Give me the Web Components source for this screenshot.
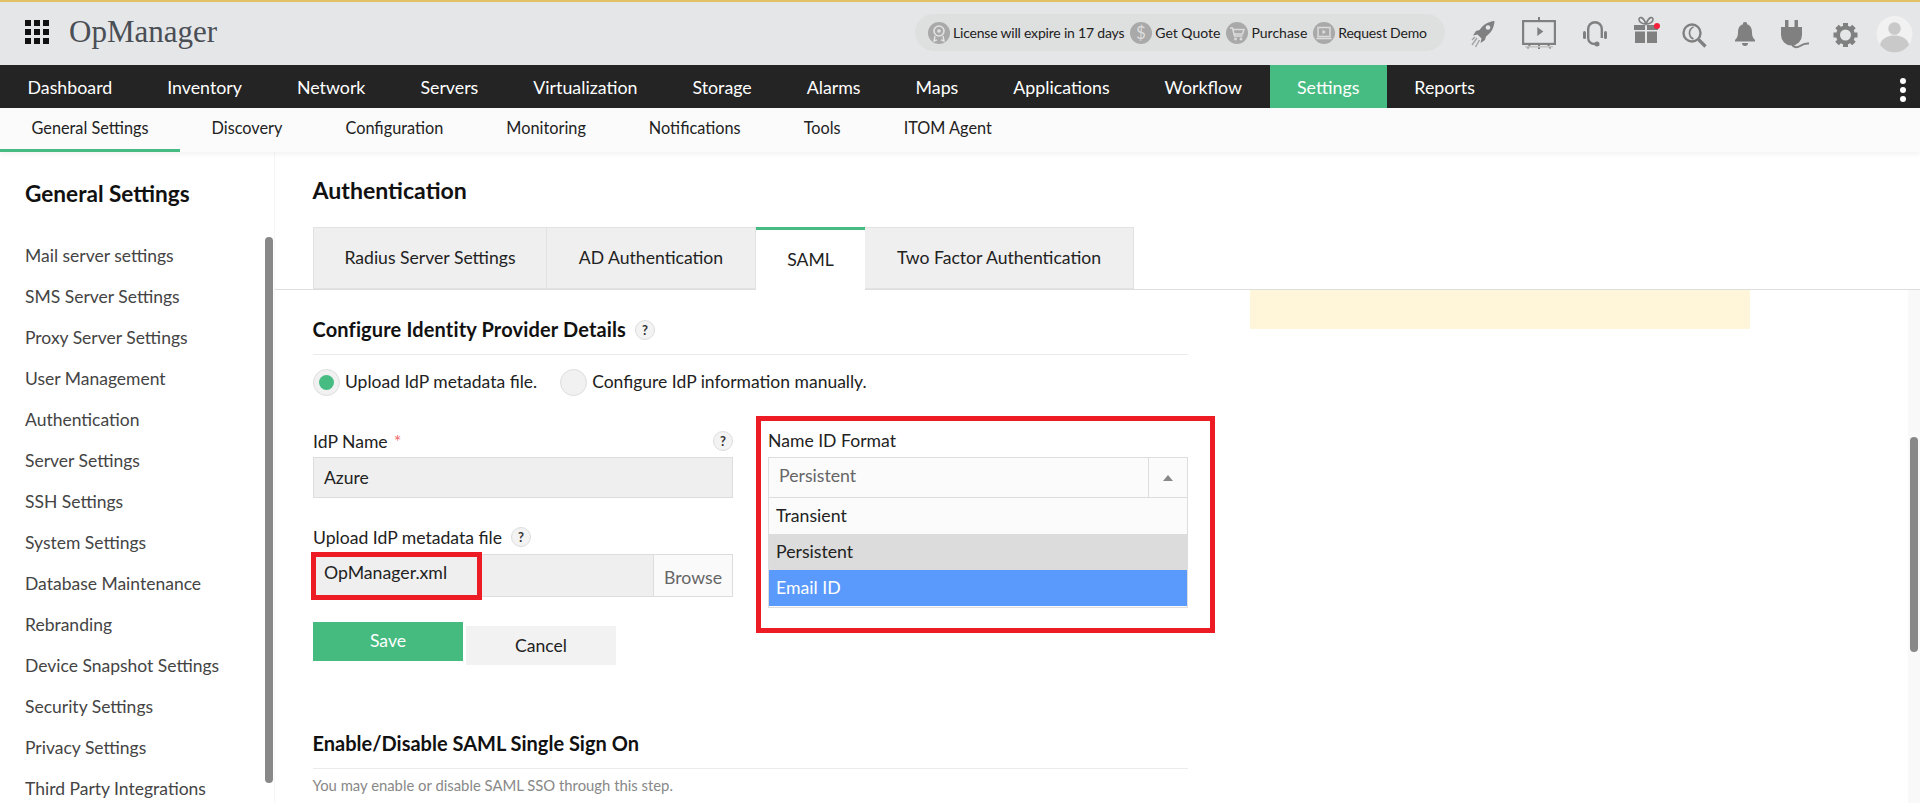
<!DOCTYPE html>
<html>
<head>
<meta charset="utf-8">
<title>OpManager</title>
<style>
  html, body { margin: 0; height: 803px; overflow: hidden; background: #fff; }
  body { font-family: Lato, "Open Sans", sans-serif; color: #222; }
</style>
</head>
<body>
<op-app>
  <op-header></op-header>
  <op-nav>
    <nav-item>Dashboard</nav-item>
    <nav-item>Inventory</nav-item>
    <nav-item>Network</nav-item>
    <nav-item>Servers</nav-item>
    <nav-item>Virtualization</nav-item>
    <nav-item>Storage</nav-item>
    <nav-item>Alarms</nav-item>
    <nav-item>Maps</nav-item>
    <nav-item>Applications</nav-item>
    <nav-item>Workflow</nav-item>
    <nav-item active>Settings</nav-item>
    <nav-item>Reports</nav-item>
  </op-nav>
  <op-subnav>
    <sub-item active>General Settings</sub-item>
    <sub-item>Discovery</sub-item>
    <sub-item>Configuration</sub-item>
    <sub-item>Monitoring</sub-item>
    <sub-item>Notifications</sub-item>
    <sub-item>Tools</sub-item>
    <sub-item>ITOM Agent</sub-item>
  </op-subnav>
  <op-body>
    <op-sidebar slot="side">
      <side-link>Mail server settings</side-link>
      <side-link>SMS Server Settings</side-link>
      <side-link>Proxy Server Settings</side-link>
      <side-link>User Management</side-link>
      <side-link>Authentication</side-link>
      <side-link>Server Settings</side-link>
      <side-link>SSH Settings</side-link>
      <side-link>System Settings</side-link>
      <side-link>Database Maintenance</side-link>
      <side-link>Rebranding</side-link>
      <side-link>Device Snapshot Settings</side-link>
      <side-link>Security Settings</side-link>
      <side-link>Privacy Settings</side-link>
      <side-link>Third Party Integrations</side-link>
    </op-sidebar>
    <op-main>
      <op-tabs slot="tabs">
        <op-tab style="width:234px">Radius Server Settings</op-tab>
        <op-tab style="width:209px">AD Authentication</op-tab>
        <op-tab active style="width:109px">SAML</op-tab>
        <op-tab style="width:269px">Two Factor Authentication</op-tab>
      </op-tabs>
      <saml-form></saml-form>
    </op-main>
  </op-body>
</op-app>

<script>
function comp(name, html) {
    const template = document.createElement('template');
    template.innerHTML = html;
    customElements.define(name, class extends HTMLElement {
        constructor() {
            super();
            this.attachShadow({mode: 'open'});
            this.shadowRoot.appendChild(template.content.cloneNode(true));
        }
    });
}

comp('op-app', `
    <style>
        :host { display: flex; flex-direction: column; width: 1920px; height: 803px; overflow: hidden; }
    </style>
    <slot></slot>
`);

comp('pill-link', `
    <style>
        :host { display: flex; align-items: center; gap: 3px; font-size: 14px; color: #222; white-space: nowrap; }
        :host([tight]) { letter-spacing: -.2px; }
        ::slotted(svg) { width: 22px; height: 22px; display: block; }
    </style>
    <slot></slot>
`);

comp('op-header', `
    <style>
        :host { display: flex; align-items: center; height: 63px; flex: none; border-top: 2px solid #e2c264; background: #e5e6e8; }
        .grid { display: grid; grid-template-columns: repeat(3, 6px); grid-auto-rows: 6px; gap: 3px; margin: 0 0 4px 25px; }
        .grid i { background: #111; }
        .logo { font: 31px "Liberation Serif", serif; color: #4a4e55; margin: 0 0 4px 20px; }
        .pill { display: flex; align-items: center; gap: 6px; margin: 0 0 2px auto; height: 37px; width: 530px; padding-left: 13px; box-sizing: border-box; border-radius: 19px; background: #dedfdf; }
        .icons { display: flex; align-items: center; margin-right: 7px; }
        .icons svg { display: block; height: 40px; fill: #808080; }
    </style>
    <div class="grid"><i></i><i></i><i></i><i></i><i></i><i></i><i></i><i></i><i></i></div>
    <div class="logo">OpManager</div>
    <div class="pill">
        <pill-link tight>
            <svg viewBox="0 0 22 22"><circle cx="11" cy="11" r="11" fill="#a9a9a9"/><circle cx="11" cy="9" r="5" fill="none" stroke="#e3e3e3" stroke-width="1.6"/><circle cx="11" cy="9" r="1.8" fill="#e3e3e3"/><path d="M7 14l-1 5 3-1.2M15 14l1 5-3-1.2" fill="none" stroke="#e3e3e3" stroke-width="1.4"/></svg>
            License will expire in 17 days
        </pill-link>
        <pill-link>
            <svg viewBox="0 0 22 22"><circle cx="11" cy="11" r="11" fill="#a9a9a9"/><text x="11" y="17" text-anchor="middle" font-family="Lato" font-size="17" fill="#dcdcdc">$</text></svg>
            Get Quote
        </pill-link>
        <pill-link>
            <svg viewBox="0 0 22 22"><circle cx="11" cy="11" r="11" fill="#a9a9a9"/><path d="M4 6h2.5l2 8h8M7 7.5h11l-1.5 4.500H8" fill="none" stroke="#dcdcdc" stroke-width="1.5"/><circle cx="9.5" cy="17" r="1.4" fill="#dcdcdc"/><circle cx="15" cy="17" r="1.4" fill="#dcdcdc"/></svg>
            Purchase
        </pill-link>
        <pill-link tight>
            <svg viewBox="0 0 22 22"><circle cx="11" cy="11" r="11" fill="#a9a9a9"/><rect x="5" y="5.5" width="12" height="9" fill="none" stroke="#dcdcdc" stroke-width="1.5"/><path d="M9.5 7.8v4.400l3.500-2.200z" fill="#dcdcdc"/><path d="M3.5 16.5h15" stroke="#dcdcdc" stroke-width="1.6"/></svg>
            Request Demo
        </pill-link>
    </div>
    <div class="icons">
        <svg style="width:24px;margin-left:26px" viewBox="0 0 24 40">
            <path d="M23.5 7C17 7.500 12 11 8.500 16L5 17l-3 4.500 4.500-1 4 4-1 4.500 4.500-3 1-3.500c5-3.500 8-8.500 8.500-15z"/>
            <circle cx="17" cy="13.500" r="2.300" fill="#e5e6e8"/>
            <path d="M6 24l-5 7M8.500 26l-4 7M4 23l-3 3" stroke="#a5a5a5" stroke-width="1.500" fill="none"/>
        </svg>
        <svg style="width:34px;margin-left:27px" viewBox="0 0 34 40">
            <path d="M16 3h2v4h-2z"/>
            <rect x="1.100" y="7.100" width="31.800" height="22.800" fill="none" stroke="#808080" stroke-width="2.200"/>
            <path d="M15.300 13v9l6-4.500z"/>
            <path d="M16 30h2v5h-2z"/>
            <path d="M8 30.500l-2.500 4M26 30.500l2.500 4" stroke="#808080" stroke-width="1.700" fill="none"/>
            <path d="M3 32h28v1.500H3z" fill="#c4c4c4"/>
        </svg>
        <svg style="width:24px;margin-left:27px" viewBox="0 0 24 40">
            <path d="M5.200 24V15a6.800 6.800 0 0 1 13.600 0v9M5.200 24c0 3.500 2.500 6 6.800 6" fill="none" stroke="#808080" stroke-width="2.400"/>
            <rect x="0" y="17" width="3" height="8" rx="1.500"/>
            <rect x="21" y="17" width="3" height="8" rx="1.500"/>
            <circle cx="14" cy="30" r="2.500"/>
        </svg>
        <svg style="width:27px;margin-left:26px" viewBox="0 0 27 40">
            <path d="M13 10C10 10 6 8.500 6 5.500c0-3 4-3.500 7 4.500 3-8 7-7.500 7-4.500S16 10 13 10z" fill="none" stroke="#808080" stroke-width="1.600"/>
            <path d="M1 11h11v5H1zM14 11h11v5H14zM2 17.500h10V29H2zM14 17.500h10V29H14z"/>
            <circle cx="24" cy="12" r="3" fill="#f5213a"/>
        </svg>
        <svg style="width:25px;margin-left:22px" viewBox="0 0 25 40">
            <circle cx="10" cy="19" r="8.500" fill="none" stroke="#808080" stroke-width="2.400"/>
            <path d="M11.500 13a6.500 6.500 0 0 0 0 12" fill="none" stroke="#808080" stroke-width="1.700"/>
            <path d="M16.500 25.500l7 7" stroke="#808080" stroke-width="3.200" fill="none"/>
        </svg>
        <svg style="width:20px;margin-left:28px" viewBox="0 0 20 40">
            <path d="M10 8a2 2 0 0 1 2 2.300c4 1 5 4.700 5 8.700 0 3 1 5 3 7v1.500H0V26c2-2 3-4 3-7 0-4 1-7.700 5-8.700A2 2 0 0 1 10 8z"/>
            <path d="M7 29h6a3 3 0 0 1-6 0z"/>
        </svg>
        <svg style="width:28px;margin-left:26px" viewBox="0 0 28 40">
            <path d="M4 6h3.500v7H4zM13.500 6H17v7h-3.500zM0 13h21v8a10.500 10.500 0 0 1-21 0z"/>
            <path d="M11 30c1 3.500 5 4 8 2s5-3 9-2.500" fill="none" stroke="#808080" stroke-width="2"/>
        </svg>
        <svg style="width:25px;margin-left:24px" viewBox="0 0 25 40">
            <circle cx="12.500" cy="21" r="7.500" fill="none" stroke="#808080" stroke-width="4"/>
            <path d="M10 9h5v5h-5zM10 28h5v5h-5zM0.500 18.500h5v5h-5zM19.500 18.500h5v5h-5z"/>
            <g transform="rotate(45 12.500 21)"><path d="M10 9h5v5h-5zM10 28h5v5h-5zM0.500 18.500h5v5h-5zM19.500 18.500h5v5h-5z"/></g>
        </svg>
        <svg style="width:37px;margin-left:18px" viewBox="0 0 37 40">
            <circle cx="18.500" cy="20" r="18" fill="#f1f1f1"/>
            <circle cx="18.500" cy="14.500" r="6.300" fill="#c9c9c9"/>
            <path d="M4 31c1.500-7 8-9.500 14.500-9.500S31.500 24 33 31a18 18 0 0 1-29 0z" fill="#c9c9c9"/>
        </svg>
    </div>
`);

comp('op-nav', `
    <style>
        :host { display: flex; height: 43px; flex: none; background: #242424; }
        .kebab { display: flex; flex-direction: column; gap: 3px; margin: 13px 14px 0 auto; }
        .kebab i { width: 6px; height: 6px; border-radius: 50%; background: #fff; }
    </style>
    <slot></slot>
    <div class="kebab"><i></i><i></i><i></i></div>
`);

comp('nav-item', `
    <style>
        :host { display: flex; align-items: center; padding: 0 27.5px; font-size: 17.8px; color: #fff; white-space: nowrap; }
        :host([active]) { background: #47bc82; }
    </style>
    <slot></slot>
`);

comp('op-subnav', `
    <style>
        :host { display: flex; height: 44px; flex: none; background: #fbfbfb; box-shadow: 0 2px 5px rgba(0,0,0,.06); position: relative; z-index: 1; }
    </style>
    <slot></slot>
`);

comp('sub-item', `
    <style>
        :host { display: flex; align-items: center; box-sizing: border-box; padding: 0 31.5px 3px; border-bottom: 3px solid transparent; font-size: 16.3px; color: #222; white-space: nowrap; }
        :host([active]) { border-bottom-color: #47bc82; }
    </style>
    <slot></slot>
`);

comp('op-body', `
    <style>
        :host { display: flex; flex: 1; min-height: 0; }
    </style>
    <slot name="side"></slot>
    <slot></slot>
`);

comp('op-sidebar', `
    <style>
        :host { display: block; width: 275px; flex: none; box-sizing: border-box; padding: 28px 0 0 25px; border-right: 1px solid #f6f6f6; position: relative; overflow: hidden; }
        h2 { margin: 0 0 27px; font-size: 22.6px; line-height: 28px; font-weight: 700; color: #111; }
        .thumb { position: absolute; left: 265px; top: 85px; width: 8px; height: 546px; border-radius: 4px; background: #888; }
    </style>
    <h2>General Settings</h2>
    <slot></slot>
    <div class="thumb"></div>
`);

comp('side-link', `
    <style>
        :host { display: block; height: 41px; line-height: 41px; font-size: 17.5px; color: #444; white-space: nowrap; }
    </style>
    <slot></slot>
`);

comp('op-main', `
    <style>
        :host { display: flex; flex-direction: column; flex: 1; min-width: 0; }
        h1 { margin: 24px 0 0 37.5px; font-size: 23.1px; line-height: 28px; font-weight: 700; color: #111; }
    </style>
    <h1>Authentication</h1>
    <slot name="tabs"></slot>
    <slot></slot>
`);

comp('op-tabs', `
    <style>
        :host { display: flex; flex: none; height: 62px; margin-top: 23px; padding-left: 38px; border-bottom: 1px solid #dedede; }
    </style>
    <slot></slot>
`);

comp('op-tab', `
    <style>
        :host { display: flex; align-items: center; justify-content: center; box-sizing: border-box; height: 62px; padding-bottom: 2px; border: 1px solid #e2e2e2; border-left-width: 0; background: #efefef; font-size: 17.6px; color: #222; white-space: nowrap; }
        :host(:first-child) { border-left-width: 1px; }
        :host([active]) { height: 63px; background: #fff; border-width: 3px 0 0; border-top-color: #47bc82; }
    </style>
    <slot></slot>
`);

comp('section-head', `
    <style>
        :host { display: flex; align-items: center; gap: 9px; height: 24px; padding-bottom: 12px; border-bottom: 1px solid #ebebeb; font-size: 20px; font-weight: 700; color: #111; }
        .text { padding-bottom: 2px; margin-left: -.5px; }
    </style>
    <span class="text"><slot></slot></span>
    <slot name="after"></slot>
`);

comp('help-dot', `
    <style>
        :host { display: inline-flex; align-items: center; justify-content: center; box-sizing: border-box; width: 20px; height: 20px; border: 1px solid #ddd; border-radius: 50%; background: #f3f3f3; font-size: 13px; font-weight: 700; letter-spacing: 0; color: #333; flex: none; }
    </style>
    ?
`);

comp('radio-opt', `
    <style>
        :host { display: flex; align-items: center; gap: 5px; font-size: 17.5px; color: #222; white-space: nowrap; }
        .dot { display: flex; align-items: center; justify-content: center; box-sizing: border-box; width: 27px; height: 27px; border: 1px solid #ddd; border-radius: 50%; background: #f1f1f1; }
        .label { padding-bottom: 2px; }
        :host([checked]) .dot::after { content: ""; width: 15px; height: 15px; border-radius: 50%; background: #47bc82; }
    </style>
    <span class="dot"></span><span class="label"><slot></slot></span>
`);

comp('field-label', `
    <style>
        :host { display: flex; align-items: center; gap: 9px; height: 22px; font-size: 17.6px; color: #222; white-space: nowrap; }
    </style>
    <slot></slot>
`);

comp('red-mark', `
    <style>
        :host { display: block; position: absolute; box-sizing: border-box; border: 5px solid #ed1c24; pointer-events: none; }
    </style>
`);

comp('file-box', `
    <style>
        :host { display: flex; box-sizing: border-box; height: 43px; margin-top: 6px; border: 1px solid #ddd; background: #efefef; position: relative; font-size: 17.7px; color: #222; }
        .name { flex: 1; padding: 6px 0 0 10px; line-height: 24px; }
        .browse { display: flex; align-items: center; justify-content: center; width: 79px; padding-top: 3px; box-sizing: border-box; border-left: 1px solid #ddd; background: #fafafa; color: #666; }
        red-mark { left: -3px; top: -3px; width: 171px; height: 48px; }
    </style>
    <div class="name"><slot></slot></div>
    <div class="browse">Browse</div>
    <red-mark></red-mark>
`);

comp('name-format', `
    <style>
        :host { display: block; position: relative; font-size: 17.7px; color: #222; }
        .label { height: 22px; line-height: 22px; font-size: 17.6px; margin-bottom: 5px; }
        .select { display: flex; box-sizing: border-box; height: 41px; border: 1px solid #ddd; background: #fbfbfb; color: #666; }
        .value { flex: 1; padding: 0 0 4px 10px; display: flex; align-items: center; }
        .arrow { display: flex; align-items: center; justify-content: center; width: 38px; border-left: 1px solid #ddd; }
        .arrow::after { content: ""; border: 5px solid transparent; border-top-width: 0; border-bottom: 6px solid #888; }
        .list { position: absolute; left: 0; right: 0; top: 68px; box-sizing: border-box; height: 110px; border: 1px solid #ddd; border-top-width: 0; background: #fbfbfb; }
        .item { height: 36px; line-height: 36px; padding-left: 7px; }
        .item.hover { background: #dcdcdc; }
        .item.sel { background: #5a9afc; color: #fff; }
        red-mark { left: -12px; top: -14px; width: 459px; height: 217px; }
    </style>
    <div class="label">Name ID Format</div>
    <div class="select"><div class="value">Persistent</div><div class="arrow"></div></div>
    <div class="list">
        <div class="item">Transient</div>
        <div class="item hover">Persistent</div>
        <div class="item sel">Email ID</div>
    </div>
    <red-mark></red-mark>
`);

comp('op-button', `
    <style>
        :host { display: flex; align-items: center; justify-content: center; width: 150px; height: 39px; background: #f2f2f2; font-size: 17.6px; color: #222; }
        :host([primary]) { background: #45bb80; color: #fff; padding-bottom: 3px; box-sizing: border-box; }
    </style>
    <slot></slot>
`);

comp('saml-form', `
    <style>
        :host { display: flex; flex: 1; min-height: 0; position: relative; overflow: hidden; }
        .col { width: 875px; margin-left: 38px; padding-top: 28px; flex: none; }
        .radios { display: flex; gap: 23px; margin-top: 14px; height: 27px; margin-bottom: 34px; }
        .fields { display: grid; grid-template-columns: 420px 420px; gap: 35px; }
        .input { box-sizing: border-box; height: 41px; margin-top: 5px; padding-left: 10px; border: 1px solid #ddd; background: #efefef; line-height: 39px; font-size: 17.5px; color: #222; }
        .name-label { padding-bottom: 0; }
        .upload { margin-top: 28px; }
        .star { color: #f26b6b; font-size: 18px; margin-left: -3px; }
        .push { flex: 1; }
        .actions { display: flex; align-items: flex-start; gap: 3px; margin-top: 25px; }
        .cancel { margin-top: 4px; }
        .second { margin-top: 67px; }
        .hint { margin-top: 7px; font-size: 14.85px; line-height: 18px; color: #888; margin-left: -.5px; }
        .notice { width: 500px; height: 39px; margin-left: 62px; flex: none; background: #fff6da; }
        .track { position: absolute; right: 0; top: 0; bottom: 0; width: 12px; background: #f9f9f9; }
        .thumb { position: absolute; left: 2px; top: 147px; width: 8px; height: 215px; border-radius: 4px; background: #888; }
        .configure { letter-spacing: .15px; }
    </style>
    <div class="col">
        <section-head class="configure">Configure Identity Provider Details <help-dot slot="after"></help-dot></section-head>
        <div class="radios">
            <radio-opt checked>Upload IdP metadata file.</radio-opt>
            <radio-opt>Configure IdP information manually.</radio-opt>
        </div>
        <div class="fields">
            <div>
                <field-label>IdP Name <span class="star">*</span><span class="push"></span><help-dot></help-dot></field-label>
                <div class="input">Azure</div>
                <field-label class="upload">Upload IdP metadata file <help-dot></help-dot></field-label>
                <file-box>OpManager.xml</file-box>
                <div class="actions">
                    <op-button primary>Save</op-button>
                    <op-button class="cancel">Cancel</op-button>
                </div>
            </div>
            <name-format></name-format>
        </div>
        <section-head class="second">Enable/Disable SAML Single Sign On</section-head>
        <div class="hint">You may enable or disable SAML SSO through this step.</div>
    </div>
    <div class="notice"></div>
    <div class="track"><div class="thumb"></div></div>
`);
</script>
</body>
</html>
